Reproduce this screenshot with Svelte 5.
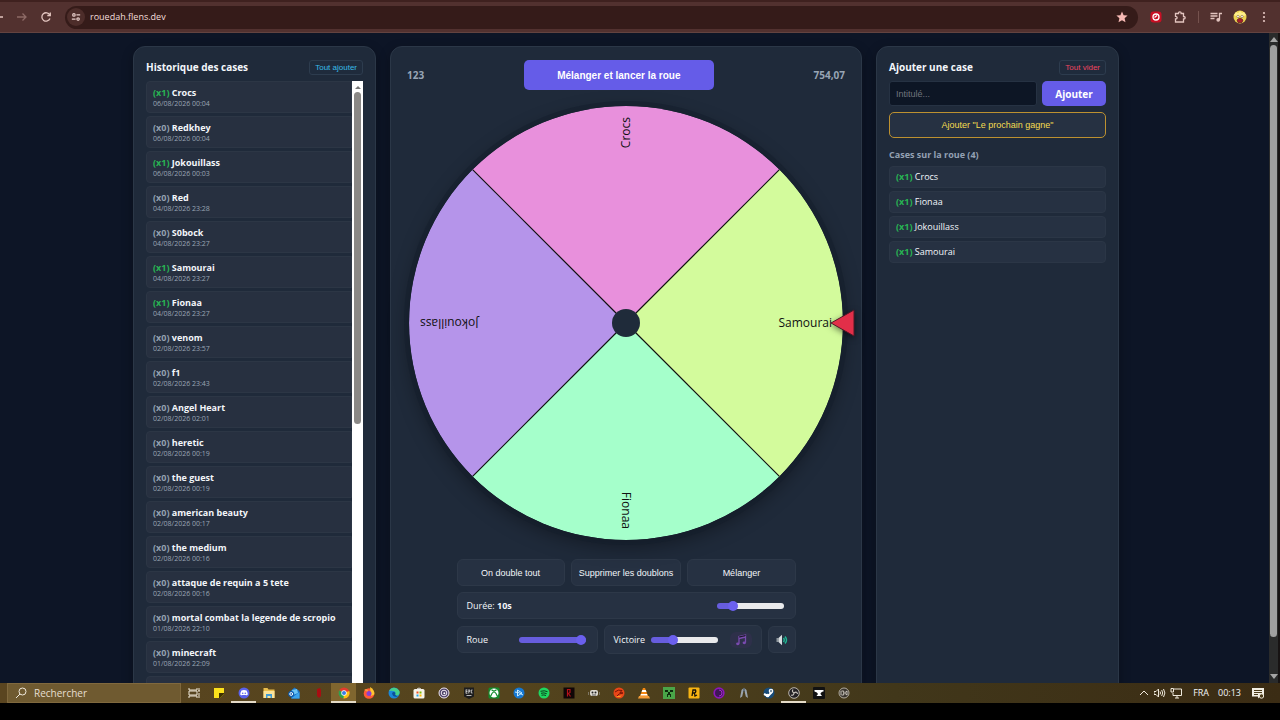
<script lang="ts">
	const history = [
		{ name: 'Crocs', count: 1, date: '06/08/2026 00:04' },
		{ name: 'Redkhey', count: 0, date: '06/08/2026 00:04' },
		{ name: 'Jokouillass', count: 1, date: '06/08/2026 00:03' },
		{ name: 'Red', count: 0, date: '04/08/2026 23:28' },
		{ name: 'S0bock', count: 0, date: '04/08/2026 23:27' },
		{ name: 'Samourai', count: 1, date: '04/08/2026 23:27' },
		{ name: 'Fionaa', count: 1, date: '04/08/2026 23:27' },
		{ name: 'venom', count: 0, date: '02/08/2026 23:57' },
		{ name: 'f1', count: 0, date: '02/08/2026 23:43' },
		{ name: 'Angel Heart', count: 0, date: '02/08/2026 02:01' },
		{ name: 'heretic', count: 0, date: '02/08/2026 00:19' },
		{ name: 'the guest', count: 0, date: '02/08/2026 00:19' },
		{ name: 'american beauty', count: 0, date: '02/08/2026 00:17' },
		{ name: 'the medium', count: 0, date: '02/08/2026 00:16' },
		{ name: 'attaque de requin a 5 tete', count: 0, date: '02/08/2026 00:16' },
		{ name: 'mortal combat la legende de scropio', count: 0, date: '01/08/2026 22:10' },
		{ name: 'minecraft', count: 0, date: '01/08/2026 22:09' }
	];

	let cases = $state(['Crocs', 'Fionaa', 'Jokouillass', 'Samourai']);
	let title = $state('');
	let duration = $state(10);
	let wheelVolume = $state(100);
	let winVolume = $state(30);

	const slices = [
		{ name: 'Samourai', color: '#d3fb9c', angle: 0 },
		{ name: 'Fionaa', color: '#a5ffcb', angle: 90 },
		{ name: 'Jokouillass', color: '#b594ea', angle: 180 },
		{ name: 'Crocs', color: '#e890dc', angle: 270 }
	];

	function addCase() {
		if (!title.trim()) return;
		cases.push(title.trim());
		title = '';
	}

	const apps = [
		{ name: 'Vue des tâches', art: '<path d="M1 1v2h8V1M1 11V9h8v2M1 4h8v4H1zM11 1v3M11 6v5M10 4h2" fill="none" stroke="#eee6d6"/>' },
		{ name: 'Notes', art: '<path d="M1 1h10v6l-4 4H1z" fill="#fbe11c"/><path d="M6 6h5v1l-4 4H6z" fill="#3d3000"/>' },
		{ name: 'Discord', running: true, art: '<circle cx="6" cy="6" r="5.500" fill="#5a61ea"/><path d="M3.500 3.600q2.500-1 5 0 1.200 2 1.200 4.200-1.500 1-2 .2h-3.400q-.5.8-2-.2 0-2.200 1.200-4.200z" fill="#fff"/><circle cx="4.700" cy="6.300" r=".8" fill="#5a61ea"/><circle cx="7.300" cy="6.300" r=".8" fill="#5a61ea"/>' },
		{ name: 'Fichiers', art: '<path d="M.5 1h4l1 1.500h6V11H.5z" fill="#e9bd4c"/><path d="M.5 4h11v7H.5z" fill="#fbe39a"/><path d="M3 11V7h6v4H7.500V9h-3v2z" fill="#3f9bd6"/>' },
		{ name: 'Outlook', art: '<path d="M1.500 5l5-4.500 5 3.500v7.500h-8z" fill="#1a73c9"/><path d="M4 3l5-1 1 4-5 2z" fill="#6cc5f5"/><path d="M3 11.500l8.500-6.500v6.500z" fill="#3ba4ec"/><circle cx="3.200" cy="7" r="3" fill="#0f5eb0"/><circle cx="3.200" cy="7" r="1.400" fill="none" stroke="#fff"/>' },
		{ name: 'Riot', art: '<path d="M4 2l3-1 1 2v6l-2 2-2-2z" fill="#a80e12"/>' },
		{ name: 'Chrome', running: true, active: true, art: '<circle cx="6" cy="6" r="5.500" fill="#e33b2e"/><path d="M6 6L1.200 3.300A5.500 5.500 0 0 0 6 11.500z" fill="#2ba24c"/><path d="M6 6l5.200-2A5.500 5.500 0 0 1 5.500 11.500z" fill="#fbc116"/><circle cx="6" cy="6" r="2.700" fill="#fff"/><circle cx="6" cy="6" r="2" fill="#3a7de8"/>' },
		{ name: 'Firefox', art: '<circle cx="6" cy="6.500" r="5.300" fill="#ff5a36"/><path d="M7 0q5 3 4.300 7.500L8 9z" fill="#ffc62e"/><path d="M1 3l2-1 2 1v2z" fill="#ff9640"/><circle cx="6" cy="6.500" r="2.500" fill="#8a3fd0"/>' },
		{ name: 'Edge', art: '<circle cx="6" cy="6" r="5.500" fill="#1b86d8"/><path d="M1 4Q4-1 9 1.500q4 3 2 6-2 1.500-4 .5Q9 3 1 4z" fill="#45d08c"/><path d="M4 6q2-2 3.500 0Q6 8 10 9.500 5 11 4 6z" fill="#0b4f99"/>' },
		{ name: 'Store', art: '<path d="M4 2q2-2 4 0" fill="none" stroke="#ddd"/><rect x=".5" y="2" width="11" height="9.500" rx="1.500" fill="#f6f3ea"/><path d="M3.500 4.500h2v2h-2z" fill="#f05023"/><path d="M6.500 4.500h2v2h-2z" fill="#7fba00"/><path d="M3.500 7.500h2v2h-2z" fill="#21a4ef"/><path d="M6.500 7.500h2v2h-2z" fill="#fdb900"/>' },
		{ name: 'Ubisoft', art: '<circle cx="6" cy="6" r="5" fill="#4c4168" stroke="#efe8f5"/><circle cx="6" cy="6" r="2.800" fill="none" stroke="#efe8f5"/><circle cx="6.300" cy="6.300" r="1" fill="#fff"/>' },
		{ name: 'Epic', art: '<path d="M1 .5h10v9L6 12 1 9.500z" fill="#1d1d1d"/><path d="M3 2.500v4M3 3h1.500M3 4.500h1.500M3 6.200h1.500M5.800 2.500v4M5.800 3h1v1.500h-1M9.500 3H8.300v3h1.200M3.500 8.500h5" fill="none" stroke="#ddd" stroke-width=".8"/>' },
		{ name: 'Xbox', art: '<rect x=".5" y=".5" width="11" height="11" rx="1.500" fill="#138c2c"/><circle cx="6" cy="6" r="4.500" fill="#fff"/><path d="M2.500 9.500Q4 5.500 6 4.500q2 1 3.500 5M3.500 2.700L6 4.300l2.500-1.600" fill="none" stroke="#138c2c" stroke-width="1.300"/>' },
		{ name: 'Battle.net', art: '<circle cx="6" cy="6" r="5.500" fill="#1678d2"/><path d="M4.500 3l4.500 3-4.500 3zM2 5q4 0 8 3" fill="none" stroke="#c9ecff"/>' },
		{ name: 'Spotify', art: '<circle cx="6" cy="6" r="5.500" fill="#1ed760"/><path d="M2.500 4.300q4-1.200 7 .4M3 6.300q3-1 5.700.4M3.500 8.200q2.500-.7 4.500.3" fill="none" stroke="#0c3b1b"/>' },
		{ name: 'Jeu', art: '<rect x=".5" y=".5" width="11" height="11" fill="#100607"/><path d="M4.500 9.500v-7H7v3L5.500 6.500l2 3" fill="none" stroke="#b31219" stroke-width="1.200"/>' },
		{ name: 'Robot', art: '<rect x="2" y="3" width="8" height="6" rx="2" fill="#ddd9d1"/><path d="M0 5v3M12 5v3" stroke="#aaa"/><circle cx="4.500" cy="5.500" r="1" fill="#222"/><circle cx="7.500" cy="5.500" r="1" fill="#222"/><path d="M4 8h4" stroke="#555"/>' },
		{ name: 'Dragon', art: '<circle cx="6" cy="6" r="5.500" fill="#ea4618"/><path d="M2 5q3-3 7-1.500L7 5.500l3 .5-4 1-2 2" fill="none" stroke="#7b1407"/><path d="M3 9.500q3 1.500 6-1z" fill="#ffae27"/>' },
		{ name: 'VLC', art: '<path d="M5 1h2l3 8H2z" fill="#f58712"/><path d="M4.300 3h3.400l.8 2H3.600zM3 7h6l.6 1.500H2.400z" fill="#fff"/><path d="M1 9h10l1 2.500H0z" fill="#f49b37"/>' },
		{ name: 'Minecraft', art: '<path d="M0 0h12v12H0z" fill="#4aa548"/><path d="M2 3h3v2H2zM7 3h3v2H7zM5 5h2v2h1v3H7V8H5v2H4V7h1z" fill="#0d2c0d"/>' },
		{ name: 'Rockstar', art: '<rect x=".5" y=".5" width="11" height="11" rx="1" fill="#f8b412"/><path d="M4 9l1-6h2.500q1 2-1 3H4.500M6.500 6l.5 3 2-1" fill="none" stroke="#17130a" stroke-width="1.300"/>' },
		{ name: 'Tor', art: '<circle cx="6" cy="6" r="4.800" fill="#3f1657" stroke="#8c17ba" stroke-width="1.700"/><path d="M6 3a3 3 0 0 1 0 6" fill="none" stroke="#a42bd0"/>' },
		{ name: 'Ark', art: '<path d="M2 11l1.500-8L6 .8 8.500 3l1.500 8-2.200-1.500L6.500 4h-1L4.200 9.500z" fill="#9aa4ad"/><path d="M6 1v4" stroke="#33404c"/>' },
		{ name: 'Steam', art: '<circle cx="6" cy="6" r="5.500" fill="#174b78"/><path d="M1 7l4 2 4-4" fill="none" stroke="#fff" stroke-width="2"/><circle cx="8" cy="4" r="2.300" fill="#fff"/><circle cx="8" cy="4" r="1.200" fill="#7893a8"/><circle cx="4.500" cy="8.500" r="1.800" fill="#fff"/>' },
		{ name: 'OBS', running: true, art: '<circle cx="6" cy="6" r="5.300" fill="#242225" stroke="#c8c3bc" stroke-width=".9"/><path d="M5 2.500q-1.500 2 1 3.500 3-2 3.500 1M6 6q-.5 3-3 2" fill="none" stroke="#c8c3bc" stroke-width="1.200"/>' },
		{ name: 'Forge', art: '<rect width="12" height="12" rx="1" fill="#111"/><path d="M1.500 3h9v1.500q-3 .5-3 2.500l1.500 2H3.500L5 7Q4.500 5 1.500 4.500z" fill="#fff"/>' },
		{ name: 'CurseForge', art: '<circle cx="6" cy="6" r="5" fill="#3a3630" stroke="#bdb7aa" stroke-width=".9"/><path d="M3 4v4M3.500 4h2.200v4H3.500M9 4L6.500 6 9 8M9 4v4" fill="none" stroke="#d4cfc5" stroke-width=".9"/>' }
	];
</script>

<div class="desktop">
	<header class="browser">
		<nav class="nav">
			<button class="tool" aria-label="Retour">
				<svg viewBox="0 0 12 12"><path d="M11 6H2M6 2L2 6l4 4" /></svg>
			</button>
			<button class="tool dim" aria-label="Suivant">
				<svg viewBox="0 0 12 12"><path d="M1 6h9M6.500 2.500L10 6l-3.500 3.500" /></svg>
			</button>
			<button class="tool" aria-label="Actualiser">
				<svg viewBox="0 0 12 12"><path d="M9.800 4A4.200 4.200 0 1 0 10 7.500M10.300 1.500v3H7.300" /></svg>
			</button>
		</nav>
		<div class="address">
			<span class="site">
				<svg viewBox="0 0 12 12"><circle cx="3.500" cy="3.500" r="1.500" /><path d="M6.500 3.500H11M1 8.500h4.500" /><circle cx="8.500" cy="8.500" r="1.500" /></svg>
			</span>
			<span class="url">rouedah.flens.dev</span>
			<svg class="star" viewBox="0 0 12 12"><path d="M6 .5l1.600 3.700 4 .4-3 2.700.9 4L6 9.200l-3.500 2.100.9-4-3-2.700 4-.4z" /></svg>
		</div>
		<div class="tools">
			<button class="tool" aria-label="Extension">
				<svg viewBox="0 0 12 12"><rect x=".5" y=".5" width="11" height="11" rx="3" fill="#c90f24" stroke="none" /><circle cx="6" cy="6" r="3" fill="none" stroke="#fff" /><path d="M4.500 6.500L7 4.500" stroke="#fff" /></svg>
			</button>
			<button class="tool" aria-label="Extensions">
				<svg viewBox="0 0 12 12"><path d="M1.500 2.500h3q0-1.700 1.300-1.700T7.100 2.500h2.400v3q1.700 0 1.700 1.200T9.500 8v3h-8V8q1.600 0 1.600-1.300T1.500 5.400z" /></svg>
			</button>
			<span class="split"></span>
			<button class="tool" aria-label="Contrôle média">
				<svg viewBox="0 0 12 12"><path d="M.5 2.500h7M.5 5h7M.5 7.500h4M9.500 9V2.500H12" /><circle cx="8.200" cy="8.800" r="1.200" fill="currentColor" /></svg>
			</button>
			<button class="tool" aria-label="Profil">
				<svg class="avatar" viewBox="0 0 14 14"><circle cx="7" cy="7" r="6.500" fill="#ecd451" stroke="none" /><path d="M1 5l2-3 2 1 2-2 2 2 2-1 2 3-2 1H3z" fill="#fff08a" stroke="none" /><circle cx="5" cy="6.500" r="1.200" fill="#fff" stroke="#6b4a20" stroke-width=".5" /><circle cx="9" cy="6.500" r="1.200" fill="#fff" stroke="#6b4a20" stroke-width=".5" /><path d="M4 10q3-3.500 6 0L9 12.500H5z" fill="#a51f2c" stroke="#5b1820" stroke-width=".7" /></svg>
			</button>
			<button class="tool" aria-label="Menu">
				<svg viewBox="0 0 12 12"><g fill="currentColor" stroke="none"><circle cx="6" cy="2" r="1.100" /><circle cx="6" cy="6" r="1.100" /><circle cx="6" cy="10" r="1.100" /></g></svg>
			</button>
		</div>
	</header>

	<div class="viewport">
		<main class="board">
			<section class="panel">
				<div class="head">
					<h2>Historique des cases</h2>
					<button class="small info">Tout ajouter</button>
				</div>
				<div class="scroller">
					<ul class="history">
						{#each history as item (item.name)}
							<li>
								<p><span class="count" class:on={item.count > 0}>(x{item.count})</span> <strong>{item.name}</strong></p>
								<time>{item.date}</time>
							</li>
						{/each}
						<li></li>
					</ul>
					<div class="list-bar">
						<span class="arrow"></span>
						<span class="thumb"></span>
					</div>
				</div>
			</section>

			<section class="panel center">
				<div class="top">
					<span>123</span>
					<button class="launch">Mélanger et lancer la roue</button>
					<span>754,07</span>
				</div>

				<div class="wheel">
					<svg viewBox="-217 -217 434 434" role="img" aria-label="Roue">
						{#each slices as slice (slice.name)}
							<path
								d="M0 0L153.400-153.400A217 217 0 0 1 153.400 153.400Z"
								fill={slice.color}
								transform="rotate({slice.angle})"
							/>
						{/each}
						{#each slices as slice (slice.name)}
							<g transform="rotate({slice.angle})">
								<path class="edge" d="M0 0L153.400-153.400" />
								<text x="206" y="4" text-anchor="end">{slice.name}</text>
							</g>
						{/each}
						<circle r="14" fill="#1f2b3a" />
					</svg>
					<svg class="pointer" viewBox="0 0 25 28"><path d="M1 14L24 1v26z" /></svg>
				</div>

				<div class="controls">
					<div class="row">
						<button class="soft">On double tout</button>
						<button class="soft">Supprimer les doublons</button>
						<button class="soft">Mélanger</button>
					</div>
					<div class="field">
						<label for="duration">Durée: <strong>{duration}s</strong></label>
						<input id="duration" type="range" min="0" max="50" bind:value={duration} style="--fill: {duration * 2}%" />
					</div>
					<div class="row">
						<div class="field wheel-sound">
							<label for="wheel-volume">Roue</label>
							<input id="wheel-volume" type="range" bind:value={wheelVolume} style="--fill: {wheelVolume}%" />
						</div>
						<div class="field win-sound">
							<label for="win-volume">Victoire</label>
							<input id="win-volume" type="range" bind:value={winVolume} style="--fill: {winVolume}%" />
							<button class="note" aria-label="Musique">
								<svg viewBox="0 0 12 12"><path d="M4 9.500V2.500L10.500 1v7.500M4 4.500L10.500 3" fill="none" stroke="#7a4bb0" stroke-width="1.300" /><ellipse cx="2.800" cy="9.800" rx="1.700" ry="1.400" fill="#7a4bb0" /><ellipse cx="9.300" cy="8.800" rx="1.700" ry="1.400" fill="#7a4bb0" /><path d="M4 3L10.500 1.500" stroke="#15121f" /></svg>
							</button>
						</div>
						<button class="soft mute" aria-label="Son">
							<svg viewBox="0 0 12 12"><path d="M.5 4h2v4h-2z" fill="#8f989e" /><path d="M2.500 4L6 .8v10.400L2.500 8z" fill="#d9dde0" /><path d="M7.500 4q1.500 2 0 4M9 2.500q3 3.500 0 7" fill="none" stroke="#20b795" stroke-width="1.400" /></svg>
						</button>
					</div>
				</div>
			</section>

			<section class="panel">
				<div class="head">
					<h2>Ajouter une case</h2>
					<button class="small danger" onclick={() => (cases = [])}>Tout vider</button>
				</div>
				<div class="add">
					<input type="text" placeholder="Intitulé..." aria-label="Intitulé" bind:value={title} />
					<button onclick={addCase}>Ajouter</button>
				</div>
				<button class="next">Ajouter "Le prochain gagne"</button>
				<h3>Cases sur la roue ({cases.length})</h3>
				<ul class="cases">
					{#each cases as name}
						<li><span class="count on">(x1)</span> {name}</li>
					{/each}
				</ul>
			</section>
		</main>
		<div class="page-bar">
			<span class="arrow"></span>
			<span class="thumb"></span>
			<span class="arrow down"></span>
		</div>
	</div>

	<footer class="taskbar">
		<label class="search">
			<svg viewBox="0 0 12 12"><circle cx="7.500" cy="4.500" r="3.500" /><path d="M5 7L1 11" /></svg>
			<input type="text" placeholder="Rechercher" aria-label="Rechercher" />
		</label>
		<div class="apps">
			{#each apps as app (app.name)}
				<button class:running={app.running} class:active={app.active} aria-label={app.name}>
					<svg viewBox="0 0 12 12">{@html app.art}</svg>
				</button>
			{/each}
		</div>
		<div class="tray">
			<svg viewBox="0 0 12 12"><path d="M2 8l4-4 4 4" /></svg>
			<svg viewBox="0 0 12 12"><path d="M0 4.500h2L4.500 2v8L2 7.500H0zM6 4.500q1 1.500 0 3M7.700 3q2 3 0 6M9.500 2q2.800 4 0 8" /></svg>
			<svg viewBox="0 0 12 12"><path d="M4 2h7.500v6.500H3V6M1 1.500h2.500V5H1zM5 11h4M7 8.500V11" /></svg>
			<span class="lang">FRA</span>
			<span class="clock">00:13</span>
			<svg viewBox="0 0 12 12"><path d="M0 1h12v8.500H8L6 11.500v-2H0z" fill="#f2eee4" stroke="none" /><path d="M2 3.500h8M2 5.500h8M2 7.500h4" stroke="#4a3a18" /><circle cx="9.500" cy="9" r="2.200" fill="#4a3a18" /></svg>
		</div>
	</footer>
</div>

<style>
	:global(body) {
		background: #000;
	}

	* {
		box-sizing: border-box;
	}

	.desktop {
		color: #f3f6fa;
		display: grid;
		font-family: 'Open Sans', 'Noto Sans', sans-serif;
		font-size: 9px;
		grid-template-rows: auto minmax(0, 1fr) auto;
		height: 100vh;
		line-height: 12px;
		overflow: hidden;
		padding-bottom: 17px;
	}

	button,
	input {
		font-family: 'Liberation Sans', Arial, sans-serif;
		font-size: 9px;
	}

	button {
		border: 0;
		cursor: pointer;
		padding: 0;
	}

	h2,
	h3,
	p,
	ul {
		margin: 0;
		padding: 0;
	}

	ul {
		list-style: none;
	}

	svg {
		display: block;
		flex: none;
	}

	/* Browser toolbar */
	.browser {
		align-items: center;
		background: #52312f;
		border-bottom: 1px solid #634340;
		border-top: 2px solid #3f211f;
		color: #e3c5c0;
		display: flex;
		height: 33px;
		padding-right: 4px;
	}

	.nav,
	.tools {
		align-items: center;
		display: flex;
	}

	.nav {
		margin: 0 7px 0 -14px;
	}

	.tools {
		margin-left: 6px;
	}

	.tool {
		align-items: center;
		background: none;
		color: inherit;
		display: flex;
		height: 24px;
		justify-content: center;
		width: 24px;
	}

	.tool.dim {
		color: #8d6a66;
	}

	.tool svg {
		fill: none;
		height: 12px;
		stroke: currentColor;
		stroke-width: 1.3;
		width: 12px;
	}

	.tool .avatar {
		height: 14px;
		width: 14px;
	}

	.split {
		background: #75524e;
		height: 12px;
		margin: 0 5px 0 6px;
		width: 1px;
	}

	.address {
		align-items: center;
		background: #351b19;
		border-radius: 12px;
		display: flex;
		flex: 1;
		height: 23px;
		padding: 0 10px 0 2px;
	}

	.site {
		background: #4d2d2a;
		border-radius: 50%;
		padding: 4px;
	}

	.site svg {
		fill: none;
		height: 10px;
		stroke: #e9d0cc;
		stroke-width: 1.4;
		width: 10px;
	}

	.url {
		color: #f3dedb;
		flex: 1;
		font-family: 'Open Sans', sans-serif;
		font-size: 9px;
		margin-left: 5px;
	}

	.star {
		fill: #f6b9b4;
		height: 12px;
		width: 12px;
	}

	/* Page */
	.viewport {
		background: #0d1526;
		display: flex;
		overflow: hidden;
	}

	.board {
		display: grid;
		flex: 1;
		gap: 14px;
		grid-template-columns: 243px minmax(0, 472px) 243px;
		justify-content: center;
		padding: 13px 17px 0 0;
	}

	.panel {
		background: #1f2a3a;
		border: 1px solid #2b3747;
		border-radius: 12px;
		box-shadow: 0 4px 12px rgba(0, 0, 0, 0.3);
		padding: 12px 12px 0;
	}

	.head {
		align-items: center;
		display: flex;
		height: 16px;
		justify-content: space-between;
		margin-bottom: 6px;
	}

	h2 {
		font-size: 10px;
		line-height: 16px;
	}

	.small {
		background: #1f2b3c;
		border: 1px solid #2d3c4e;
		border-radius: 3px;
		font-size: 8px;
		height: 15px;
		padding: 0 5px;
	}

	.info {
		color: #38bde8;
	}

	.danger {
		color: #ee4560;
	}

	.scroller {
		display: flex;
	}

	.history {
		display: grid;
		flex: 1;
		gap: 3px;
	}

	.history li {
		background: #273040;
		border: 1px solid #2c3645;
		border-radius: 4px 0 0 4px;
		height: 32px;
		padding: 5px 6px;
	}

	.history p {
		font-size: 9px;
		line-height: 12px;
		white-space: nowrap;
	}

	.history time {
		color: #9aa5b4;
		display: block;
		font-size: 7px;
		line-height: 10px;
	}

	.count {
		color: #94a1b1;
		font-weight: 700;
	}

	.count.on {
		color: #28b553;
	}

	.list-bar,
	.page-bar {
		align-items: center;
		display: flex;
		flex-direction: column;
	}

	.list-bar {
		background: #fff;
		width: 11px;
	}

	.list-bar .arrow {
		border: 3px solid transparent;
		border-bottom-color: #777;
		margin: 2px 0 3px;
	}

	.list-bar .thumb {
		background: #8a8886;
		border-radius: 4px;
		height: 53%;
		width: 7px;
	}

	.page-bar {
		background: #2a2b2b;
		border-right: 2px solid #171313;
		justify-content: space-between;
		width: 11px;
	}

	.page-bar .arrow {
		border: 4px solid transparent;
		border-bottom: 5px solid #a5a5a5;
		border-top: 0;
		margin-top: 4px;
	}

	.page-bar .down {
		margin-bottom: 4px;
		transform: rotate(180deg);
	}

	.page-bar .thumb {
		background: #9f9f9f;
		border-radius: 4px;
		height: 91%;
		margin: 3px 0 auto;
		width: 7px;
	}

	/* Wheel */
	.top {
		align-items: center;
		color: #98a5b5;
		display: flex;
		font-size: 10px;
		font-weight: 700;
		justify-content: space-between;
		margin: 1px 4px 16px;
	}

	.launch,
	.add button {
		background: #655ce8;
		border-radius: 5px;
		color: #fff;
		font-weight: 700;
	}

	.launch {
		font-size: 10px;
		height: 30px;
		padding: 0 33px;
	}

	.wheel {
		margin: 0 auto;
		max-width: 434px;
		position: relative;
	}

	.wheel > svg:first-child {
		border-radius: 50%;
		box-shadow: 0 0 0 5px rgba(20, 30, 43, 0.5), 0 6px 20px rgba(0, 0, 0, 0.4);
	}

	.wheel text {
		fill: #111;
		font-size: 12px;
	}

	.edge {
		stroke: #111;
		stroke-width: 1.2;
	}

	.wheel .pointer {
		filter: drop-shadow(0 2px 3px rgba(0, 0, 0, 0.5));
		position: absolute;
		right: -12px;
		top: calc(50% - 14px);
		width: 25px;
	}

	.pointer path {
		fill: #e22f49;
		stroke: #521827;
	}

	.controls {
		display: grid;
		gap: 6px;
		margin: 19px auto 0;
		max-width: 339px;
	}

	.row {
		align-items: center;
		display: flex;
		gap: 6px;
	}

	.soft,
	.field {
		background: #263142;
		border: 1px solid #2d3848;
		border-radius: 6px;
		color: #f3f6fa;
	}

	.soft {
		flex: 1;
		height: 27px;
		padding: 0 7px;
		white-space: nowrap;
	}

	.field {
		align-items: center;
		display: flex;
		height: 27px;
		justify-content: space-between;
		padding: 0 11px 0 9px;
	}

	.wheel-sound {
		width: 141px;
	}

	.win-sound {
		flex: 1;
		gap: 6px;
		height: 29px;
		justify-content: flex-start;
		padding-right: 9px;
	}

	.soft.mute {
		align-items: center;
		display: flex;
		flex: none;
		padding: 0 7px;
	}

	.mute svg,
	.note svg {
		height: 12px;
		width: 12px;
	}

	.note {
		background: #2e304a;
		border-radius: 6px;
		margin-left: auto;
		padding: 2px 5px;
	}

	input[type='range'] {
		appearance: none;
		background: none;
		height: 12px;
		margin: 0;
		width: 67px;
	}

	input[type='range']::-webkit-slider-runnable-track {
		background: linear-gradient(90deg, #675dde var(--fill), #e9eaec var(--fill));
		border-radius: 3px;
		height: 6px;
	}

	input[type='range']::-webkit-slider-thumb {
		appearance: none;
		background: #6b60ee;
		border-radius: 50%;
		height: 10px;
		margin-top: -2px;
		width: 10px;
	}

	/* Add a case */
	.add {
		display: flex;
		gap: 5px;
		height: 25px;
		margin-bottom: 6px;
	}

	.add input {
		background: #0d1625;
		border: 1px solid #263243;
		border-radius: 3px;
		color: #fff;
		flex: 1;
		min-width: 0;
		padding: 0 6px;
	}

	.add input::placeholder {
		color: #70757d;
	}

	.add button {
		font-family: 'Open Sans', sans-serif;
		font-size: 10px;
		width: 64px;
	}

	.next {
		background: #263142;
		border: 1px solid #bd9130;
		border-radius: 5px;
		color: #f5dc50;
		height: 26px;
		width: 100%;
	}

	h3 {
		color: #94a1b4;
		font-size: 9px;
		line-height: 12px;
		margin: 11px 0 5px;
	}

	.cases {
		display: grid;
		gap: 3px;
	}

	.cases li {
		background: #263142;
		border: 1px solid #2b3646;
		border-radius: 4px;
		line-height: 20px;
		padding: 0 6px;
	}

	/* Taskbar */
	.taskbar {
		align-items: center;
		background: linear-gradient(90deg, #5a4520, #54441d 40%, #41371a 70%, #3b2c14);
		display: flex;
		height: 20px;
		padding: 0 16px 0 7px;
	}

	.search {
		align-items: center;
		background: #6f5a30;
		border: 1px solid #80693e;
		display: flex;
		gap: 7px;
		height: 20px;
		padding: 0 7px;
		width: 174px;
	}

	.search svg,
	.tray svg {
		fill: none;
		height: 12px;
		stroke: #efe9dc;
		width: 12px;
	}

	.search input {
		background: none;
		border: 0;
		flex: 1;
		font-family: 'Open Sans', sans-serif;
		font-size: 10px;
		min-width: 0;
		padding: 0;
	}

	.search input::placeholder {
		color: #e6dfd1;
	}

	.apps {
		display: flex;
		flex: 1;
	}

	.apps button {
		align-items: center;
		background: none;
		border-bottom: 2px solid transparent;
		border-top: 2px solid transparent;
		display: flex;
		height: 20px;
		justify-content: center;
		width: 25px;
	}

	.apps svg {
		height: 12px;
		width: 12px;
	}

	.apps .running {
		border-bottom-color: #e4dac7;
	}

	.apps .active {
		background: #80662f;
		border-top-color: #80662f;
	}

	.tray {
		align-items: center;
		display: flex;
		gap: 4px;
	}

	.lang {
		margin: 0 5px 0 7px;
	}

	.clock {
		margin-right: 7px;
	}
</style>
